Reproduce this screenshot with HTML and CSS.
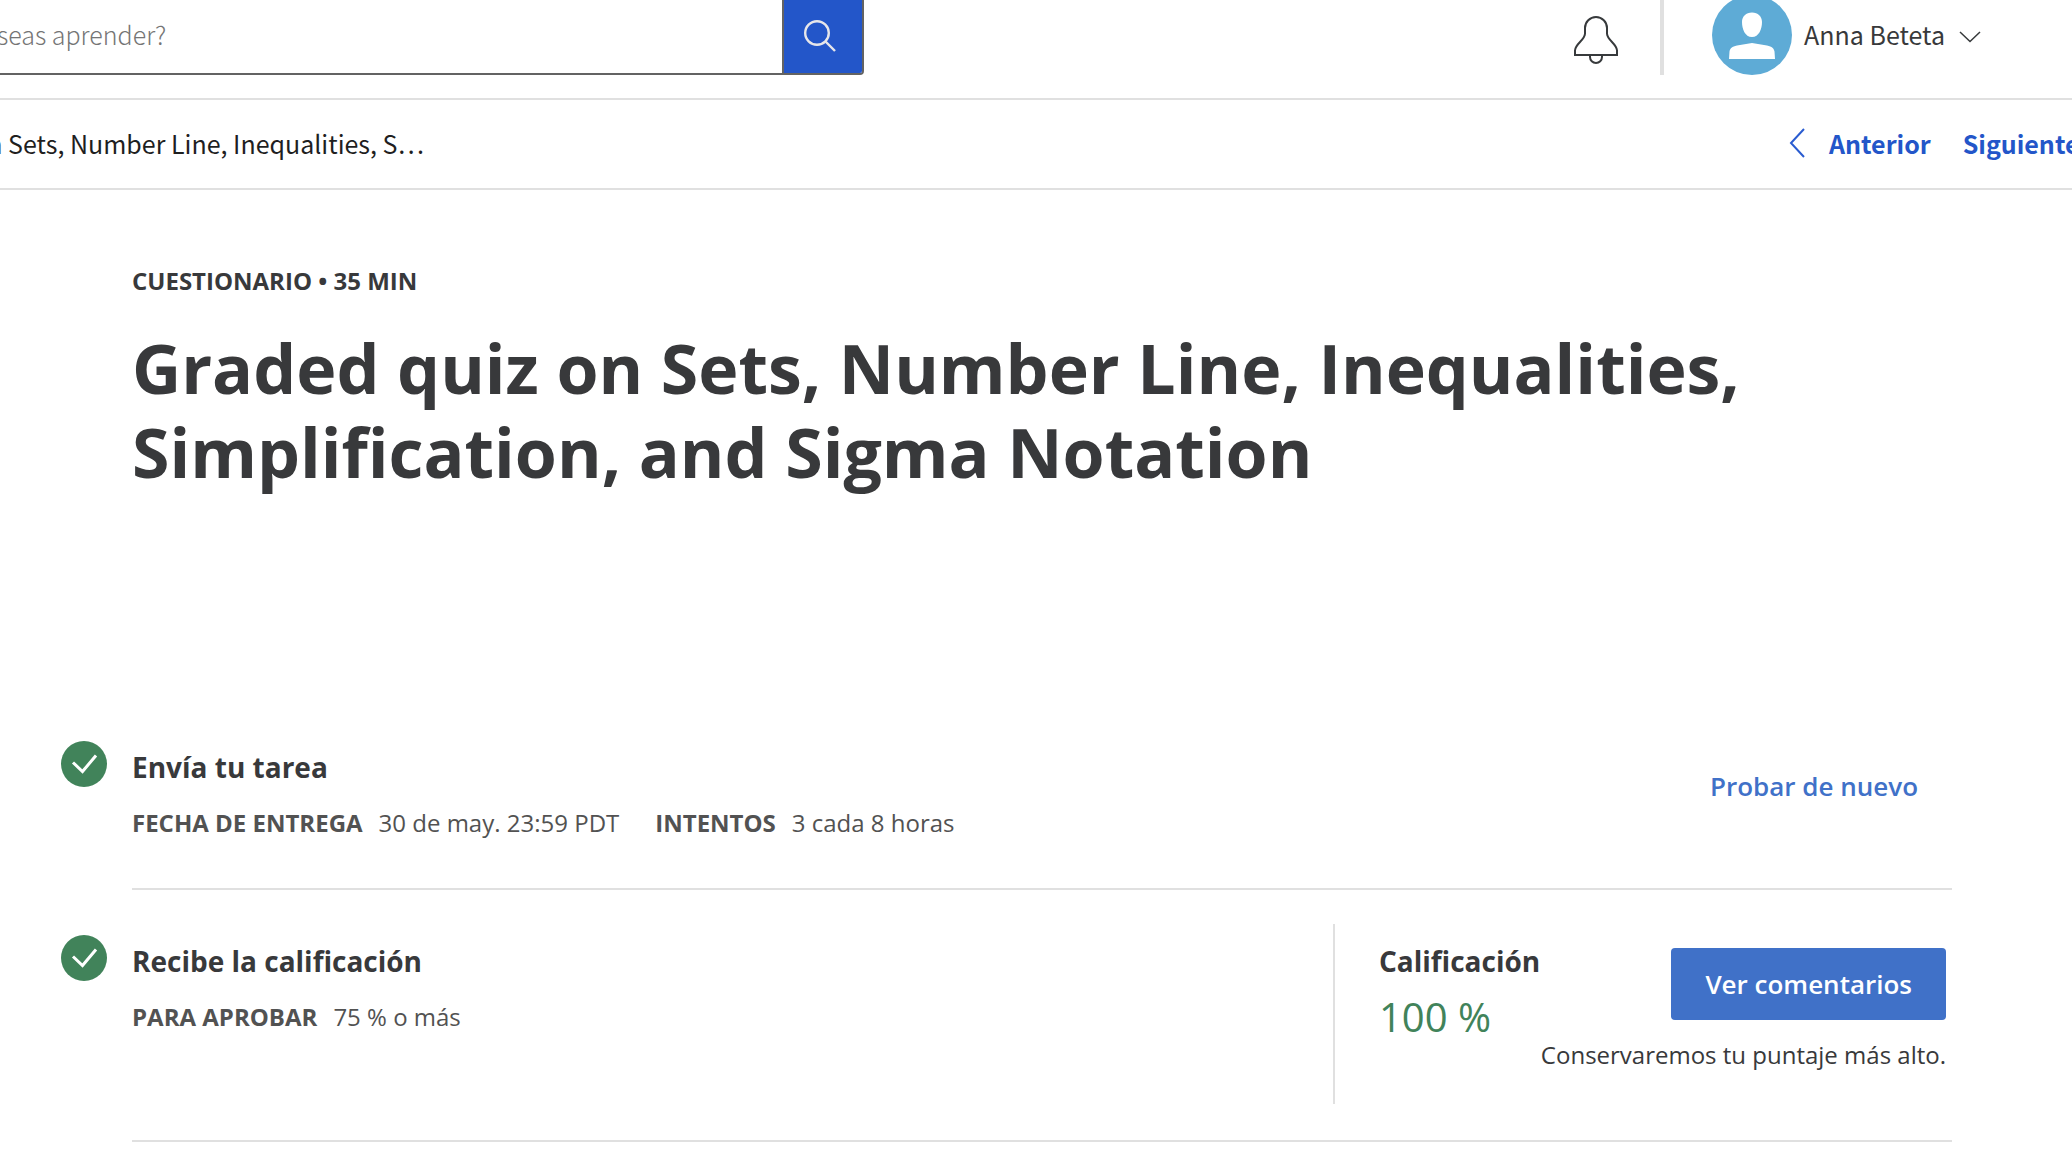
FILE: index.html
```html
<!DOCTYPE html>
<html lang="es">
<head>
<meta charset="utf-8">
<meta name="viewport" content="width=device-width, initial-scale=1">
<title>Graded quiz on Sets, Number Line, Inequalities</title>
<link rel="stylesheet" href="styles.css">
</head>
<body>
<header class="topbar">
  <form class="search">
    <input class="search-input" type="text" aria-label="Buscar" placeholder="¿Qué deseas aprender?">
    <button class="search-button" type="button" aria-label="Buscar">
      <svg width="34" height="34" viewBox="0 0 34 34" fill="none" stroke="#e6e6ea" stroke-width="2.4"><circle cx="14" cy="15" r="11.8"/><path d="M22.500 23.500L32 33"/></svg>
    </button>
  </form>
  <div class="account">
    <button class="bell" type="button" aria-label="Notificaciones">
      <svg width="44" height="48" viewBox="0 0 44 48" fill="none" stroke="#373a3c" stroke-width="2"><path d="M1 39V34.500C1 28 11 24 11 17.500V12A11 11 0 0 1 33 12V17.500C33 24 43 28 43 34.500V39Z"/><path d="M16 39.500V41A6 6 0 0 0 28 41V39.500"/></svg>
    </button>
    <span class="separator"></span>
    <button class="user" type="button">
      <svg class="avatar" width="80" height="80" viewBox="0 0 80 80"><circle cx="40" cy="40" r="40" fill="#5eabd6"/><path d="M40 17.500c6 0 10 4 10 9.500C50 34 47 42 40 42s-10-8-10-15C30 21.500 34 17.500 40 17.500zM40 48l15 2.500c5 1 7 3 7.500 6L63 64H17l.5-7.500c.5-3 2.500-5 7.500-6z" fill="#fff"/></svg>
      <span>Anna Beteta</span>
      <svg class="caret" width="22" height="12" viewBox="0 0 22 12" fill="none" stroke="#373a3c" stroke-width="1.500"><path d="M1 1l10 9.500L21 1"/></svg>
    </button>
  </div>
</header>
<div class="coursebar">
  <div class="crumb"><span>Graded quiz on Sets, Number Line, Inequalities, S…</span></div>
  <nav class="pager">
    <a href="#anterior"><svg width="16" height="30" viewBox="0 0 16 30" fill="none" stroke="#2a5cd0" stroke-width="2"><path d="M15 1L2 15l13 14"/></svg>Anterior</a>
    <a href="#siguiente">Siguiente</a>
  </nav>
</div>
<main class="quiz">
  <div class="intro">
    <p class="kind">CUESTIONARIO • 35 MIN</p>
    <h1>Graded quiz on Sets, Number Line, Inequalities, Simplification, and Sigma Notation</h1>
  </div>
  <ul class="steps">
    <li class="step">
      <svg class="check" width="46" height="46" viewBox="0 0 46 46"><circle cx="23" cy="23" r="23" fill="#41835a"/><path d="M12 21.500L21.500 30.500 35 14.500" fill="none" stroke="#fff" stroke-width="3"/></svg>
      <div class="step-body">
        <div class="step-text">
          <h2>Envía tu tarea</h2>
          <p class="facts"><b>FECHA DE ENTREGA</b><span>30 de may. 23:59 PDT</span><b class="next">INTENTOS</b><span>3 cada 8 horas</span></p>
        </div>
        <button class="retry" type="button">Probar de nuevo</button>
      </div>
    </li>
    <li class="step">
      <svg class="check" width="46" height="46" viewBox="0 0 46 46"><circle cx="23" cy="23" r="23" fill="#41835a"/><path d="M12 21.500L21.500 30.500 35 14.500" fill="none" stroke="#fff" stroke-width="3"/></svg>
      <div class="step-body">
        <div class="step-text">
          <h2>Recibe la calificación</h2>
          <p class="facts"><b>PARA APROBAR</b><span>75 % o más</span></p>
        </div>
        <div class="result">
          <div class="grade">
            <h2>Calificación</h2>
            <p class="score">100 %</p>
          </div>
          <div class="feedback">
            <button class="primary" type="button">Ver comentarios</button>
            <p class="note">Conservaremos tu puntaje más alto.</p>
          </div>
        </div>
      </div>
    </li>
  </ul>
</main>
</body>
</html>
```
FILE: styles.css
```css
* { box-sizing: border-box; }
body {
  margin: 0;
  background: #fff;
  color: #38393b;
  font-family: "Open Sans", sans-serif;
  font-size: 24px;
  line-height: 32px;
}
h1, h2, p, ul { margin: 0; padding: 0; }
ul { list-style: none; }
button { border: 0; padding: 0; background: none; color: inherit; font: inherit; cursor: pointer; }
svg { display: block; flex: none; }

.topbar, .coursebar {
  font-family: "Noto Sans CJK SC", sans-serif;
  font-size: 25px;
  line-height: 40px;
  white-space: nowrap;
  overflow: hidden;
  border-bottom: 2px solid #e0e0e0;
}
.topbar {
  display: flex;
  justify-content: space-between;
  align-items: flex-end;
  height: 100px;
  padding-bottom: 23px;
}
.search {
  display: flex;
  flex: 0 0 984px;
  height: 80px;
  margin-left: -120px;
  border: 2px solid #636363;
  border-radius: 4px;
  overflow: hidden;
}
.search-input {
  flex: 1;
  min-width: 0;
  border: 0;
  padding: 0 24px 2px;
  outline: 0;
  font: inherit;
  font-weight: 300;
}
.search-input::placeholder { color: #757575; opacity: 1; }
.search-button {
  display: flex;
  align-items: center;
  justify-content: center;
  width: 80px;
  padding-right: 6px;
  border-left: 2px solid #636363;
  background: #2356c9;
}
.account { display: flex; align-items: center; height: 80px; padding-right: 91px; }
.bell { padding-top: 10px; }
.separator { width: 4px; height: 80px; margin: 0 48px 0 42px; background: #e0e0e0; }
.user { display: flex; align-items: center; }
.user span { padding: 0 14px 2px 12px; }
.caret { margin-top: 4px; }

.coursebar {
  display: flex;
  justify-content: space-between;
  align-items: center;
  height: 90px;
  padding-bottom: 2px;
  color: #1f1f1f;
}
.crumb { display: flex; justify-content: flex-end; width: 424px; overflow: hidden; }
.pager { display: flex; gap: 32px; flex: 0 0 283px; min-width: 0; }
.pager a { display: flex; align-items: center; gap: 24px; color: #2356c9; font-weight: 700; text-decoration: none; }

.quiz { padding: 75px 120px 0 61px; }
.intro { padding-left: 71px; min-height: 431px; }
.kind { font-weight: 700; margin-bottom: 29px; }
h1 { font-size: 68px; line-height: 84px; font-weight: 700; }
h2 { font-size: 28px; line-height: 40px; font-weight: 700; }

.step { display: flex; }
.check { margin: 45px 25px 0 0; }
.step-body { display: flex; justify-content: space-between; flex: 1; border-bottom: 2px solid #e0e0e0; }
.step-text { padding: 51px 0 49px; }
.facts { display: flex; margin-top: 20px; color: #525252; }
.facts span { margin-left: 16px; }
.facts .next { margin-left: 36px; }
.retry, .primary { font-size: 26px; line-height: 40px; font-weight: 600; }
.retry { align-self: flex-start; margin-top: 54px; padding: 16px 34px; color: #4071c8; }
.result {
  display: flex;
  justify-content: space-between;
  width: 619px;
  min-height: 180px;
  margin: 34px 0 36px;
  padding: 17px 6px 0 44px;
  border-left: 2px solid #e0e0e0;
}
.grade { flex: 0 0 160px; }
.score { margin-top: 8px; color: #41835a; font-size: 40px; line-height: 56px; }
.feedback { display: flex; flex-direction: column; align-items: flex-end; padding-top: 7px; white-space: nowrap; }
.primary { padding: 16px 34px; border-radius: 4px; background: #4071c8; color: #fff; }
.note { margin-top: 19px; }
```
